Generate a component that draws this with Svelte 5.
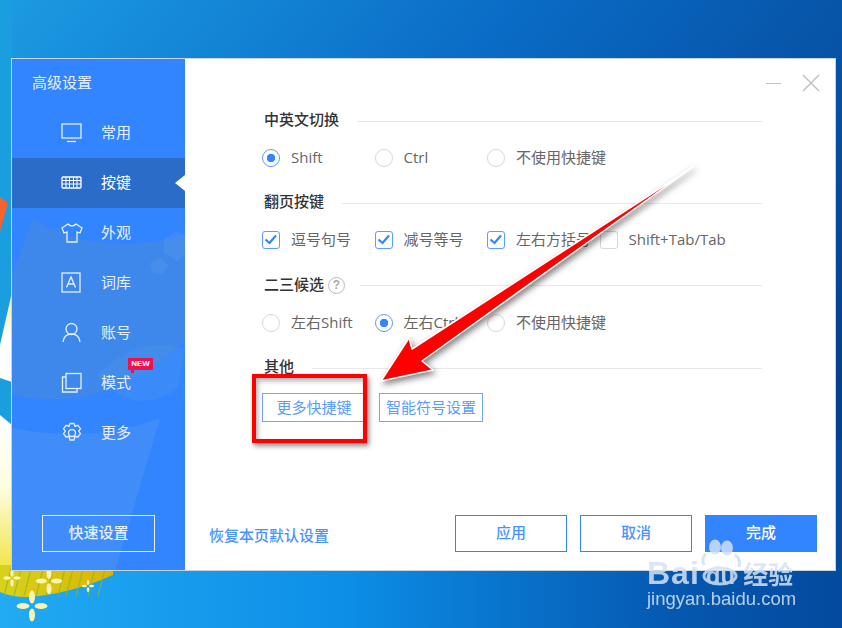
<!-- AdvancedSettings.svelte -->
<script>
  const menu = [
    { name: '常用', icon: 'monitor' },
    { name: '按键', icon: 'keyboard', active: true },
    { name: '外观', icon: 'shirt' },
    { name: '词库', icon: 'lexicon' },
    { name: '账号', icon: 'user' },
    { name: '模式', icon: 'mode', badge: true },
    { name: '更多', icon: 'gear' }
  ];
  const switchOptions = [
    { label: 'Shift', on: true },
    { label: 'Ctrl' },
    { label: '不使用快捷键' }
  ];
  const pageOptions = [
    { label: '逗号句号', on: true },
    { label: '减号等号', on: true },
    { label: '左右方括号', on: true },
    { label: 'Shift+Tab/Tab' }
  ];
  const candOptions = [
    { label: '左右Shift' },
    { label: '左右Ctrl', on: true },
    { label: '不使用快捷键' }
  ];
  // small four petal flowers on the wallpaper
  const flowers = [
    { x: 12, y: 578, s: 0.55 },
    { x: 49, y: 581, s: 0.85 },
    { x: 88, y: 586, s: 0.4 },
    { x: 32, y: 606, s: 1 }
  ];
  // grass blades over the yellow hill
  const blades = [4, 14, 24, 36, 46, 58, 66, 76, 88, 98];
</script>

{#snippet radios(options)}
  <div class="options">
    {#each options as opt}
      <div class="option">
        <span class="radio" class:on={opt.on}></span>
        <span class="label">{opt.label}</span>
      </div>
    {/each}
  </div>
{/snippet}

<div class="desktop">
  <!-- wallpaper -->
  <svg class="wallpaper" viewBox="0 0 842 628" width="842" height="628">
    <defs>
      <linearGradient id="sky" x1="0" y1="0" x2="1" y2="0.6">
        <stop offset="0" stop-color="#1c9be2" />
        <stop offset="0.45" stop-color="#0a6cc6" />
        <stop offset="1" stop-color="#04408f" />
      </linearGradient>
      <linearGradient id="floor" x1="0" y1="0" x2="1" y2="0">
        <stop offset="0" stop-color="#22aaf2" />
        <stop offset="0.4" stop-color="#0d8fe8" />
        <stop offset="0.8" stop-color="#0558b0" />
        <stop offset="1" stop-color="#044a9f" />
      </linearGradient>
      <linearGradient id="glow" x1="0" y1="0" x2="0" y2="1">
        <stop offset="0" stop-color="#fff" />
        <stop offset="0.45" stop-color="#fdfde0" />
        <stop offset="1" stop-color="#f2e23a" />
      </linearGradient>
      <linearGradient id="wedge" x1="0" y1="0" x2="0" y2="1">
        <stop offset="0" stop-color="#efe98a" />
        <stop offset="0.5" stop-color="#fff" />
        <stop offset="1" stop-color="#fff" />
      </linearGradient>
      <linearGradient id="grass" x1="0" y1="0" x2="1" y2="0">
        <stop offset="0" stop-color="#d8d21c" />
        <stop offset="1" stop-color="#dcb400" />
      </linearGradient>
    </defs>
    <rect width="842" height="628" fill="url(#sky)" />
    <rect y="440" width="842" height="188" fill="url(#floor)" />
    <rect width="12" height="440" fill="#1b9ee0" />
    <polygon points="0,197 8,203 0,231" fill="#f4622d" />
    <polygon points="12,292 12,382 0,378 0,345" fill="url(#wedge)" />
    <polygon points="0,415 12,425 12,575 0,575" fill="url(#glow)" />
    <path d="M0 565 H113 V575 Q70 594 28 597 Q10 597 0 592Z" fill="url(#grass)" />
    <g stroke="#8fb52a" stroke-width="1.200" opacity="0.75">
      {#each blades as b}
        <path d="M{b} 596 L{b + 8} 565" />
      {/each}
    </g>
    <g fill="#fbf3b0">
      {#each flowers as f}
        <g transform="translate({f.x} {f.y}) scale({f.s})">
          <ellipse cy="-9" rx="3" ry="6.500" />
          <ellipse cy="9" rx="3" ry="6.500" />
          <ellipse cx="-9" rx="6.500" ry="3" />
          <ellipse cx="9" rx="6.500" ry="3" />
        </g>
      {/each}
    </g>
  </svg>

  <div class="window">
    <aside class="sidebar">
      <svg class="sidebar-art" viewBox="0 0 173 512" width="173" height="512">
        <path d="M21 160 Q90 200 173 176 V282 Q90 358 0 335 V215Z" fill="#4a8cd8" opacity="0.5" />
        <path d="M0 369 Q80 385 148 359 L103 512 H0Z" fill="#5f9fe8" opacity="0.3" />
        <path d="M85 315 Q130 275 173 290 L165 330 Q120 360 85 315Z" fill="#5f9fe8" opacity="0.2" />
        <polygon points="152,180 165,172 173,176 173,196 165,202 152,194" fill="#fff" opacity="0.05" />
        <polygon points="138,204 148,198 156,206 150,216 140,214" fill="#fff" opacity="0.05" />
      </svg>
      <h1>高级设置</h1>
      <nav>
        {#each menu as item}
          <div class="item" class:active={item.active}>
            <svg class="icon" viewBox="0 0 22 22" width="22" height="22" fill="none" stroke="currentColor" stroke-width="1.300">
              {#if item.icon === 'monitor'}
                <rect x="1" y="2" width="19" height="14" />
                <path d="M6 19.500h9" />
              {:else if item.icon === 'keyboard'}
                <rect x="1" y="5" width="19" height="11" rx="1" />
                <path d="M1 8.500h19M1 12h19M5 5v11M8.500 5v11M12.500 5v11M16 5v11" stroke-width="1" />
              {:else if item.icon === 'shirt'}
                <path d="M7 2 L1 6 L3 11 L6 10 V20 H16 V10 L19 11 L21 6 L15 2 Q11 6 7 2Z" />
              {:else if item.icon === 'lexicon'}
                <rect x="1" y="1" width="18" height="19" />
                <path d="M5.500 15.500 L10 5 L14.500 15.500 M7 12h6" />
              {:else if item.icon === 'user'}
                <circle cx="10.500" cy="7" r="5.500" />
                <path d="M2 20 Q3 12 10.500 12 Q18 12 19 20" />
              {:else if item.icon === 'mode'}
                <rect x="5" y="1.500" width="15" height="15" />
                <path d="M5 5 H1.500 V20 H16 V16.500" />
              {:else}
                <circle cx="11" cy="11" r="3.500" />
                <path d="M9 1.500h4l1 2.800 2.800-1 2.700 3.400-1.800 2.300 1.800 2.800-2.700 3.400-2.800-1-1 3.800H9l-1-3.800-2.800 1-2.700-3.400 1.800-2.800-1.800-2.300 2.700-3.400 2.800 1z" />
              {/if}
            </svg>
            <span class="label">{item.name}</span>
            {#if item.badge}<em class="badge">NEW</em>{/if}
          </div>
        {/each}
      </nav>
      <button class="quick">快速设置</button>
    </aside>

    <main class="content">
      <div class="win-controls">
        <span class="min"></span>
        <svg viewBox="0 0 18 18" width="18" height="18" stroke="#c4c4c4" stroke-width="1.600">
          <path d="M1 1 L17 17 M17 1 L1 17" />
        </svg>
      </div>

      <section>
        <div class="head"><h2>中英文切换</h2><i></i></div>
        {@render radios(switchOptions)}
      </section>

      <section>
        <div class="head"><h2>翻页按键</h2><i></i></div>
        <div class="options">
          {#each pageOptions as opt}
            <div class="option">
              <span class="check" class:on={opt.on}>
                {#if opt.on}
                  <svg viewBox="0 0 16 16" width="16" height="16" fill="none" stroke="#3385ff" stroke-width="2.200">
                    <path d="M2.500 7.500 L6.500 11 L13 3.500" />
                  </svg>
                {/if}
              </span>
              <span class="label">{opt.label}</span>
            </div>
          {/each}
        </div>
      </section>

      <section>
        <div class="head">
          <h2>二三候选</h2>
          <span class="help">?</span>
          <i></i>
        </div>
        {@render radios(candOptions)}
      </section>

      <section>
        <div class="head"><h2>其他</h2><i></i></div>
        <div class="links">
          <button class="outline">更多快捷键</button>
          <button class="outline">智能符号设置</button>
        </div>
      </section>

      <footer>
        <span class="reset">恢复本页默认设置</span>
        <div class="actions">
          <button class="action">应用</button>
          <button class="action">取消</button>
          <button class="action primary">完成</button>
        </div>
      </footer>
    </main>
  </div>

  <!-- annotation drawn over the shot -->
  <div class="red-box"></div>
  <svg class="arrow" viewBox="0 0 842 628" width="842" height="628">
    <polygon points="693,167 412,349 409,338 381,381 433,370 422,361" fill="#f00" stroke="#fff" stroke-width="1.500" stroke-linejoin="round" />
  </svg>

  <!-- watermark -->
  <div class="watermark">
    <svg class="paw" viewBox="0 0 50 48" width="50" height="48" fill="none" stroke="#cfe0f5" stroke-width="3">
      <ellipse cx="12" cy="9" rx="6" ry="7.500" fill="#cfe0f5" stroke="none" />
      <ellipse cx="24" cy="10" rx="6" ry="7.500" fill="#cfe0f5" stroke="none" />
      <path d="M1 27 Q-2 20 3 16 M32 17 Q38 20 36 29" />
      <ellipse cx="17" cy="38" rx="16" ry="8" />
    </svg>
    <div class="brand"><b>Bai</b><b class="du">du</b><span>经验</span></div>
    <div class="site">jingyan.baidu.com</div>
  </div>
</div>

<style>
  :global(body) {
    margin: 0;
  }

  .desktop {
    position: relative;
    width: 842px;
    height: 628px;
    overflow: hidden;
    font-family: "Noto Sans CJK SC", "Liberation Sans", sans-serif;
  }

  .wallpaper {
    position: absolute;
    inset: 0;
  }

  .window {
    position: absolute;
    left: 11px;
    top: 58px;
    width: 825px;
    height: 513px;
    box-sizing: border-box;
    border: 1px solid #c9d3de;
    display: flex;
    background: #fff;
  }

  .sidebar {
    position: relative;
    width: 173px;
    flex: none;
    background: #3385ff;
    color: #e6f0ff;
    display: flex;
    flex-direction: column;
    overflow: hidden;
  }

  .sidebar-art {
    position: absolute;
    left: 0;
    top: 0;
  }

  h1 {
    position: relative;
    margin: 0;
    padding: 12px 0 0 20px;
    height: 37px;
    font-size: 15px;
    line-height: 21px;
    font-weight: 400;
  }

  nav {
    position: relative;
  }

  .item {
    position: relative;
    height: 50px;
    display: flex;
    align-items: center;
    gap: 18px;
    padding-left: 49px;
    font-size: 15px;
  }

  .item .label {
    padding-bottom: 3px;
  }

  .item.active {
    background: #2a6cc8;
    color: #fff;
  }

  .item.active::after {
    content: "";
    position: absolute;
    right: 0;
    top: 17px;
    border: 8px solid transparent;
    border-left: 0;
    border-right: 10px solid #fff;
  }

  .badge {
    position: absolute;
    left: 116px;
    top: 0;
    width: 25px;
    height: 12px;
    background: #f0104f;
    color: #fff;
    font: 700 8px/12px "Liberation Sans", sans-serif;
    text-align: center;
  }

  .badge::after {
    content: "";
    position: absolute;
    left: 3px;
    top: 12px;
    border: 2px solid transparent;
    border-top: 3px solid #f0104f;
    border-left: 3px solid #f0104f;
    border-bottom: 0;
    border-right: 0;
  }

  .quick {
    position: relative;
    margin: auto 0 18px 30px;
    width: 113px;
    height: 37px;
    box-sizing: border-box;
    background: none;
    border: 1px solid #e6f0ff;
    color: #e6f0ff;
    font: 500 15px "Noto Sans CJK SC", sans-serif;
    padding: 0 0 4px;
  }

  .content {
    position: relative;
    flex: 1;
    box-sizing: border-box;
    padding: 52px 73px 18px 79px;
    display: flex;
    flex-direction: column;
  }

  .win-controls {
    position: absolute;
    right: 15px;
    top: 15px;
    display: flex;
    align-items: center;
    gap: 21px;
  }

  .min {
    width: 15px;
    height: 1px;
    background: #c4c4c4;
  }

  section {
    height: 82.400px;
  }

  .head {
    display: flex;
    align-items: center;
    height: 20px;
  }

  h2 {
    margin: 0 0 4px;
    font-size: 15px;
    font-weight: 500;
    color: #333;
    line-height: 20px;
  }

  .head i {
    flex: 1;
    height: 1px;
    margin-left: 18px;
    background: #e8e8e8;
  }

  .help {
    width: 17px;
    height: 17px;
    margin-left: 4px;
    margin-right: -3px;
    box-sizing: border-box;
    border: 1.500px solid #bbb;
    border-radius: 50%;
    color: #aaa;
    font: 700 12px/14px "Liberation Sans", sans-serif;
    text-align: center;
  }

  .options {
    display: flex;
    margin: 17px 0 0 -2px;
    font-size: 15px;
    font-family: "Open Sans", "Noto Sans CJK SC", sans-serif;
    color: #666;
  }

  .option {
    width: 112.500px;
    height: 20px;
    display: flex;
    align-items: center;
    gap: 11px;
    white-space: nowrap;
  }

  .option .label {
    padding-bottom: 3px;
  }

  .radio {
    width: 18px;
    height: 18px;
    flex: none;
    box-sizing: border-box;
    border: 1.500px solid #d8d8d8;
    border-radius: 50%;
  }

  .radio.on {
    border-color: #5a9cff;
    background: radial-gradient(circle, #3385ff 0 4px, #fff 4.500px);
  }

  .check {
    width: 18px;
    height: 18px;
    flex: none;
    box-sizing: border-box;
    border: 1.500px solid #d8d8d8;
    border-radius: 3px;
    display: flex;
    align-items: center;
    justify-content: center;
  }

  .check.on {
    border-color: #5a9cff;
  }

  .links {
    display: flex;
    gap: 13px;
    margin: 15px 0 0 -2px;
  }

  button {
    cursor: pointer;
  }

  .outline {
    width: 104px;
    height: 29px;
    padding: 0 0 3px;
    box-sizing: border-box;
    background: #fff;
    border: 1px solid #70a8ff;
    color: #5a9cff;
    font: 400 15px "Noto Sans CJK SC", sans-serif;
  }

  footer {
    margin: auto -55px 0 -55px;
    display: flex;
    align-items: center;
    justify-content: space-between;
  }

  .reset {
    font-size: 15px;
    font-weight: 500;
    color: #4a93ff;
    padding-top: 1px;
  }

  .actions {
    display: flex;
    gap: 13px;
  }

  .action {
    width: 112px;
    height: 37px;
    padding: 0 0 4px;
    box-sizing: border-box;
    background: #fff;
    border: 1px solid #3385ff;
    color: #4a93ff;
    font: 500 15px "Noto Sans CJK SC", sans-serif;
  }

  .action.primary {
    background: #3385ff;
    color: #fff;
  }

  .red-box {
    position: absolute;
    left: 252px;
    top: 374px;
    width: 115px;
    height: 69px;
    box-sizing: border-box;
    border: 4px solid #f00;
    box-shadow: 2px 3px 5px rgba(0, 0, 0, 0.45), inset 2px 3px 5px rgba(0, 0, 0, 0.3);
  }

  .arrow {
    position: absolute;
    inset: 0;
    filter: drop-shadow(2px 3px 3px rgba(0, 0, 0, 0.5));
  }

  .watermark {
    position: absolute;
    left: 647px;
    top: 536px;
    width: 160px;
    height: 75px;
    color: #d5e3f5;
    opacity: 0.85;
  }

  .paw {
    position: absolute;
    left: 56px;
    top: 2px;
    overflow: visible;
  }

  .brand {
    position: absolute;
    left: 0;
    top: 20px;
    display: flex;
    align-items: baseline;
    font-family: "Liberation Sans", sans-serif;
    font-size: 32px;
    letter-spacing: 1px;
    line-height: 34px;
    white-space: nowrap;
  }

  .brand .du {
    font-size: 24px;
    letter-spacing: 0;
    margin-left: 6px;
  }

  .brand span {
    font-family: "Noto Sans CJK SC", sans-serif;
    font-size: 25px;
    letter-spacing: 0;
    line-height: 34px;
    margin-left: 8px;
    font-weight: 700;
  }

  .site {
    position: absolute;
    left: 0;
    top: 52px;
    font: 18.500px/22px "Liberation Sans", sans-serif;
    white-space: nowrap;
  }
</style>
